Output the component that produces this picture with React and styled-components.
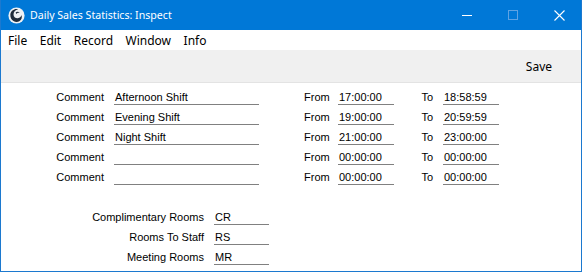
import styled, { createGlobalStyle } from 'styled-components'

const Global = createGlobalStyle`
  html, body { margin: 0; padding: 0; background: #fff; }
  body { font-family: "Liberation Sans", Arial, sans-serif; }
`

const Window = styled.div`
  width: 582px;
  height: 272px;
  box-sizing: border-box;
  border: 1px solid #1c79cf;
  border-top: none;
  display: flex;
  flex-direction: column;
  background: #fff;
  overflow: hidden;
`

const TitleBar = styled.div`
  height: 30px;
  margin: 0 -1px;
  background: #0078d7;
  display: flex;
  align-items: center;
  color: #fff;
  font-family: "Noto Sans", "Open Sans", sans-serif;
`

const AppIcon = styled.div`
  width: 17px;
  height: 17px;
  margin: 0 5px 0 8px;
  display: flex;
`

const Title = styled.div`
  flex: 1;
  font-size: 10.6px;
`

const Caption = styled.div`
  width: 46px;
  height: 30px;
  display: flex;
  align-items: center;
  justify-content: center;
`

const MenuBar = styled.div`
  height: 20px;
  display: flex;
  align-items: center;
  padding-left: 7px;
  gap: 12.5px;
  font-family: "Noto Sans", "Open Sans", sans-serif;
  font-size: 12px;
  color: #000;
`

const Toolbar = styled.div`
  height: 32px;
  background: #f0f0f0;
  border-bottom: 1px solid #e3e3e3;
  display: flex;
  align-items: center;
  justify-content: flex-end;
  padding-right: 29px;
  font-family: "Noto Sans", "Open Sans", sans-serif;
  font-size: 12px;
`

const Content = styled.div`
  flex: 1;
  padding-top: 4px;
  font-size: 11px;
  color: #000;
`

const Row = styled.div`
  height: 20px;
  display: flex;
  align-items: center;
`

const Label = styled.div`
  width: ${p => p.$w}px;
  text-align: right;
  padding-right: 10px;
  box-sizing: border-box;
  white-space: nowrap;
`

const Field = styled.div`
  width: ${p => p.$w}px;
  height: 15px;
  box-sizing: border-box;
  border-bottom: 1px solid #808080;
  padding-left: 1px;
  line-height: 14px;
  white-space: nowrap;
`

const Gap = styled.div`
  width: ${p => p.$w}px;
`

const Spacer = styled.div`
  height: 20px;
`

const shifts = [
  ['Afternoon Shift', '17:00:00', '18:58:59'],
  ['Evening Shift', '19:00:00', '20:59:59'],
  ['Night Shift', '21:00:00', '23:00:00'],
  ['', '00:00:00', '00:00:00'],
  ['', '00:00:00', '00:00:00'],
]

const rooms = [
  ['Complimentary Rooms', 'CR'],
  ['Rooms To Staff', 'RS'],
  ['Meeting Rooms', 'MR'],
]

export default function App() {
  return (
    <>
      <Global />
      <Window>
        <TitleBar>
          <AppIcon>
            <svg width="17" height="17" viewBox="0 0 16 16">
              <circle cx="8" cy="8" r="7.6" fill="#eef1f4" />
              <path d="M2.2 7 C2.6 3.5 6 1.2 9.5 2 C7 2.6 5.3 4.4 5.2 6.8 C5.1 9.2 7 10.8 9.3 10.6 C11 10.4 12.3 9.2 12.6 7.6 C13.6 9.8 12.8 12.4 10.6 13.5 C7.8 14.8 4.4 13.6 3 11 C2.4 9.8 2.1 8.4 2.2 7 Z" fill="#1f2b3a" />
              <path d="M7.2 5.2 C8.2 4.2 10.2 4.3 11.2 5.6 C10 5.2 8.6 5.5 7.8 6.6 Z" fill="#1f2b3a" />
            </svg>
          </AppIcon>
          <Title>Daily Sales Statistics: Inspect</Title>
          <Caption>
            <svg width="10" height="10" viewBox="0 0 10 10"><path d="M0 5.5 H10" stroke="#fff" strokeWidth="1" /></svg>
          </Caption>
          <Caption>
            <svg width="10" height="10" viewBox="0 0 10 10"><rect x="0.5" y="0.5" width="9" height="9" fill="none" stroke="#5fa3e3" strokeWidth="1" /></svg>
          </Caption>
          <Caption>
            <svg width="11" height="11" viewBox="0 0 11 11"><path d="M0.5 0.5 L10.5 10.5 M10.5 0.5 L0.5 10.5" stroke="#fff" strokeWidth="1.1" /></svg>
          </Caption>
        </TitleBar>
        <MenuBar>
          <span>File</span>
          <span>Edit</span>
          <span>Record</span>
          <span>Window</span>
          <span>Info</span>
        </MenuBar>
        <Toolbar>Save</Toolbar>
        <Content>
          {shifts.map(([c, f, t], i) => (
            <Row key={i}>
              <Label $w={113}>Comment</Label>
              <Field $w={145}>{c}</Field>
              <Gap $w={45} />
              <Label $w={34}>From</Label>
              <Field $w={56}>{f}</Field>
              <Gap $w={27} />
              <Label $w={22}>To</Label>
              <Field $w={56}>{t}</Field>
            </Row>
          ))}
          <Spacer />
          {rooms.map(([l, v]) => (
            <Row key={v}>
              <Label $w={213}>{l}</Label>
              <Field $w={55}>{v}</Field>
            </Row>
          ))}
        </Content>
      </Window>
    </>
  )
}
